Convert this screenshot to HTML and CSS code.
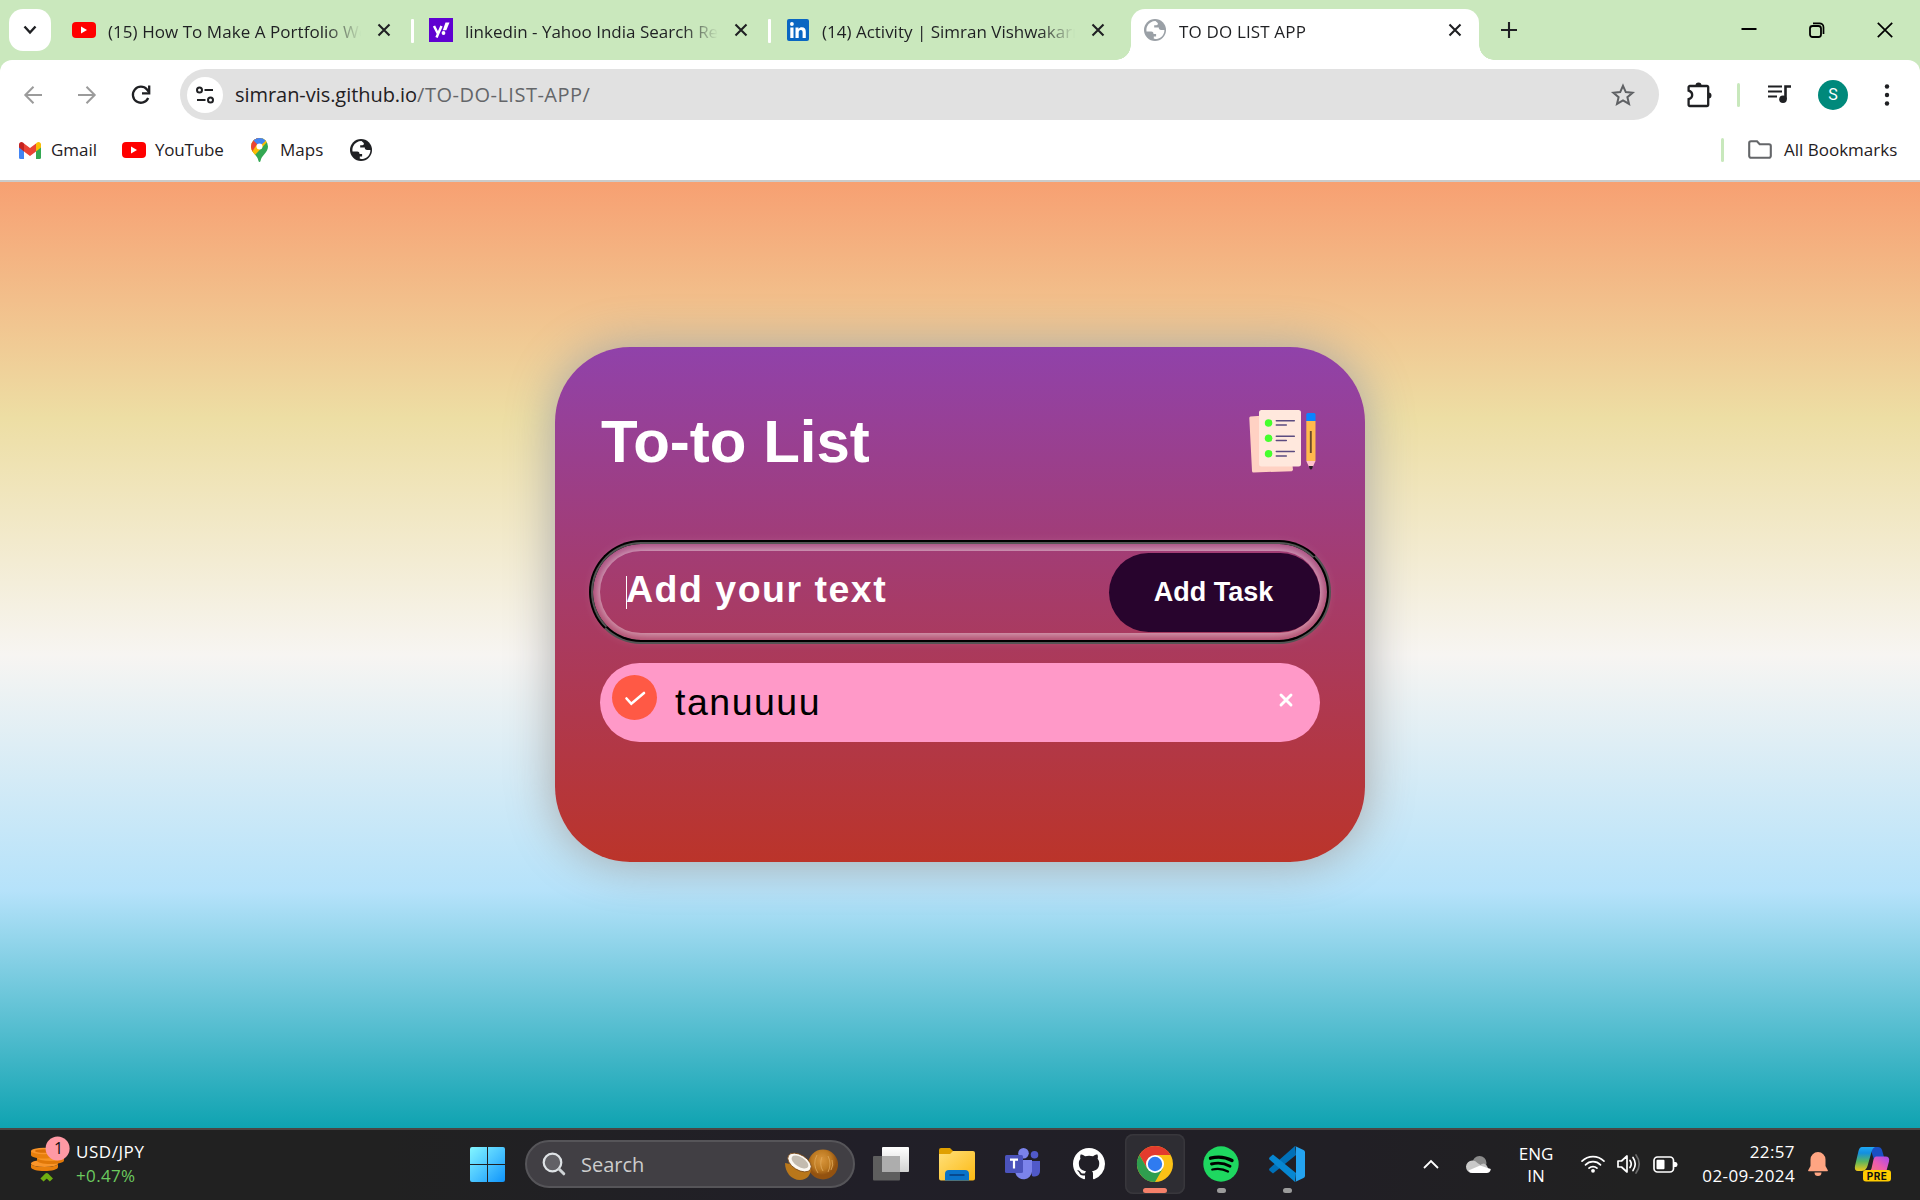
FILE: index.html
```html
<!DOCTYPE html>
<html lang="en">
<head>
<meta charset="utf-8">
<title>TO DO LIST APP</title>
<link rel="stylesheet" href="styles.css">
</head>
<body>
<svg class="sprite" aria-hidden="true">
  <symbol id="youtube" viewBox="0 0 24 18"><rect y="1" width="24" height="16" rx="4" fill="#f00"/><path d="M9 5.5v7l6-3.5z" fill="#fff"/></symbol>
  <symbol id="close" viewBox="0 0 16 16"><path d="M2.5 2.5l11 11M13.500 2.500l-11 11" stroke="#1f2023" stroke-width="2.100" fill="none"/></symbol>
  <symbol id="globe" viewBox="0 0 24 24"><circle cx="12" cy="12" r="11" fill="currentColor"/><path d="M12.500 3c-3.500 0-6.800 2-8.300 5.200-.8 1.800-.9 3.200-.7 5.300h4.700c1.800 0 2.300 1.200 2.300 2.500h2.600v2.500h-2.300v2.300c4 .7 8.200-1.400 9.600-4.600.7-1.500 1-2.700 1-4.300h-3.600c-1.600 0-2-1-2-2.300h-4.600V7.200h2c1.500 0 2-1.200 1.500-2.300z" fill="var(--land)"/></symbol>
</svg>

<header class="browser">
  <div class="tabstrip">
    <button class="tab-search"><svg width="14" height="10" viewBox="0 0 14 10"><path d="M1.500 1.500L7 7.500l5.500-6" fill="none" stroke="#1f2023" stroke-width="2.400"/></svg></button>
    <div class="tab">
      <svg class="fav" viewBox="0 0 24 24"><use href="#youtube" y="3" width="24" height="18"/></svg>
      <span class="tab-title t1">(15) How To Make A Portfolio Website</span>
      <svg class="x"><use href="#close"/></svg><i class="tab-sep"></i>
    </div>
    <div class="tab">
      <svg class="fav" viewBox="0 0 24 24"><rect width="24" height="24" fill="#5f01d1"/><path d="M5 8l3.700 7.300M12.500 8L7.500 19.500" stroke="#fff" stroke-width="2.500" fill="none"/><path d="M16.500 4.500h4l-3.200 7.700h-3.500z" fill="#fff"/><circle cx="14.500" cy="15" r="1.900" fill="#fff"/></svg>
      <span class="tab-title t2">linkedin - Yahoo India Search Results</span>
      <svg class="x"><use href="#close"/></svg><i class="tab-sep"></i>
    </div>
    <div class="tab">
      <svg class="fav" viewBox="0 0 24 24"><rect x="1" y="1" width="22" height="22" rx="2" fill="#0a66c2"/><path d="M4.300 9.500h3.200V20H4.300zM9.500 9.500h3v1.400c.7-1.100 1.800-1.700 3.300-1.700 3 0 4 1.900 4 4.700V20h-3.200v-5.400c0-1.500-.4-2.600-1.800-2.600s-2.100 1.100-2.100 2.600V20H9.500z" fill="#fff"/><circle cx="5.900" cy="6" r="1.900" fill="#fff"/></svg>
      <span class="tab-title t3">(14) Activity | Simran Vishwakarma</span>
      <svg class="x"><use href="#close"/></svg>
    </div>
    <div class="tab active">
      <svg class="fav globe-gray"><use href="#globe"/></svg>
      <span class="tab-title t4">TO DO LIST APP</span>
      <svg class="x"><use href="#close"/></svg>
    </div>
    <svg class="new-tab" width="16" height="16" viewBox="0 0 16 16"><path d="M8 0v16M0 8h16" stroke="#1f2023" stroke-width="2.100"/></svg>
    <div class="window-buttons">
      <svg width="16" height="16" viewBox="0 0 16 16"><path d="M.5 7h15" stroke="#000" stroke-width="2"/></svg>
      <svg width="16" height="16" viewBox="0 0 16 16"><rect x="1" y="4" width="11" height="11" rx="2.500" fill="none" stroke="#000" stroke-width="1.800"/><path d="M4 1.300h6.500a4 4 0 0 1 4 4V12" fill="none" stroke="#000" stroke-width="1.700"/></svg>
      <svg width="16" height="16" viewBox="0 0 16 16"><path d="M.8.800l14.400 14.400M15.200.800L.8 15.200" stroke="#000" stroke-width="1.700"/></svg>
    </div>
  </div>

  <div class="toolbar">
    <svg class="nav-back" width="20" height="20" viewBox="0 0 20 20"><path d="M19 10H3M10.500 1.800L2.300 10l8.200 8.200" fill="none" stroke="#9b9b9b" stroke-width="2"/></svg>
    <svg class="nav-fwd" width="20" height="20" viewBox="0 0 20 20"><path d="M1 10h16M9.500 1.800l8.200 8.200-8.200 8.200" fill="none" stroke="#9b9b9b" stroke-width="2"/></svg>
    <svg class="nav-reload" width="22" height="22" viewBox="0 0 22 22"><path d="M18.200 14A8 8 0 1 1 17 5.500l1.500 2" fill="none" stroke="#1f2023" stroke-width="2.300"/><path d="M12 9.300h7.200V1.500" fill="none" stroke="#1f2023" stroke-width="2.300"/></svg>
    <div class="omnibox">
      <div class="site-chip"><svg width="20" height="20" viewBox="0 0 20 20"><g fill="none" stroke="#1f2023" stroke-width="2"><circle cx="4.500" cy="5" r="2.500"/><path d="M9.500 5h8.500M2 15h8.500"/><circle cx="15.500" cy="15" r="2.500"/></g></svg></div>
      <span class="url">simran-vis.github.io<span>/TO-DO-LIST-APP/</span></span>
      <svg class="star" width="24" height="24" viewBox="0 0 24 24"><path d="M12 2.800l2.800 6.300 6.800.6-5.200 4.500 1.600 6.700-6-3.600-6 3.600 1.600-6.700-5.200-4.500 6.800-.6z" fill="none" stroke="#5f6164" stroke-width="2"/></svg>
    </div>
    <svg class="puzzle" width="26" height="26" viewBox="0 0 26 26"><path d="M4 4h17a1.200 1.200 0 0 1 1.200 1.200v17.600a1.200 1.200 0 0 1-1.200 1.200H3.800a1.200 1.200 0 0 1-1.200-1.200v-5.600c4.800-1.500 4.800-7 0-8.500V5.200A1.200 1.200 0 0 1 4 4z" fill="none" stroke="#1f2023" stroke-width="2.300"/><path d="M9.500 3.500a3 3 0 0 1 6 0zM22.500 10.500a3 3 0 0 1 0 6z" fill="#1f2023"/></svg>
    <i class="green-sep"></i>
    <svg class="media" width="24" height="20" viewBox="0 0 24 20"><path d="M0 1.500h14M0 6.500h14M0 11.500h9" stroke="#1f2023" stroke-width="2.200"/><path d="M23 1.500h-5.500V14" fill="none" stroke="#1f2023" stroke-width="2.600"/><circle cx="15" cy="14.300" r="3.800" fill="#1f2023"/></svg>
    <div class="avatar">S</div>
    <svg class="menu" width="6" height="24" viewBox="0 0 6 24"><g fill="#1f2023"><circle cx="3" cy="3.500" r="2.200"/><circle cx="3" cy="12" r="2.200"/><circle cx="3" cy="20.500" r="2.200"/></g></svg>
  </div>

  <nav class="bookmarks">
    <svg class="bm-gmail" width="22" height="17" viewBox="0 0 22 17"><path d="M0 2v13.500A1.500 1.500 0 0 0 1.500 17H5V6z" fill="#4285f4"/><path d="M22 2v13.500a1.500 1.500 0 0 1-1.500 1.500H17V6z" fill="#34a853"/><path d="M0 2.500C0 .3 2.400-.6 4 .6L5 1.400v8L0 5.500z" fill="#c5221f"/><path d="M22 2.500c0-2.200-2.400-3.100-4-1.900l-1 .8v8l5-3.900z" fill="#fbbc04"/><path d="M5 1.400l6 4.600 6-4.600v8L11 14 5 9.400z" fill="#ea4335"/></svg>
    <span class="b1">Gmail</span>
    <svg class="bm-yt" width="24" height="18"><use href="#youtube"/></svg>
    <span class="b2">YouTube</span>
    <svg class="bm-maps" width="17" height="24" viewBox="0 0 17 24"><defs><clipPath id="pin"><path d="M8.500 0A8.500 8.500 0 0 0 0 8.500c0 3 1.500 5 3.500 7.500 2 2.500 3.500 4 4 7 .2 1.300 1.800 1.300 2 0 .5-3 2-4.500 4-7 2-2.500 3.500-4.500 3.500-7.500A8.500 8.500 0 0 0 8.500 0z"/></clipPath></defs><g clip-path="url(#pin)"><rect width="17" height="24" fill="#34a853"/><path d="M0 0h17L0 20z" fill="#fbbc04"/><path d="M17 3L1 20-2 12 13 0z" fill="#fbbc04"/><path d="M-2 0h12L1 14z" fill="#ea4335"/><path d="M2 2L8.500 8.500 15.500 2 8-2z" fill="#4285f4"/></g><circle cx="8.500" cy="8.500" r="3" fill="#fff"/></svg>
    <span class="b3">Maps</span>
    <svg class="bm-globe" width="24" height="24"><use href="#globe"/></svg>
    <i class="green-sep"></i>
    <svg class="folder" width="24" height="19" viewBox="0 0 24 19"><path d="M3 1.200h6l2.700 3H21A1.800 1.800 0 0 1 22.800 6v10A1.800 1.800 0 0 1 21 17.800H3A1.800 1.800 0 0 1 1.200 16V3A1.800 1.800 0 0 1 3 1.200z" fill="none" stroke="#646669" stroke-width="2.100"/></svg>
    <span class="b4">All Bookmarks</span>
  </nav>
</header>

<main class="page">
  <section class="card">
    <div class="card-head">
      <h1>To-to List</h1>
      <svg width="72" height="66" viewBox="0 0 72 66">
        <path d="M2.500 8.500L39 6l6 56-1.200 1.200L5.500 64.500a1.500 1.500 0 0 1-1.500-1.500L1.300 10a1.500 1.500 0 0 1 1.200-1.500z" fill="#ffd1c3"/>
        <rect x="11" y="2" width="42" height="56.500" rx="2.500" fill="#ffe8dd"/>
        <g fill="#46ff2e"><circle cx="20.600" cy="15" r="3.800"/><circle cx="20.600" cy="30.300" r="3.800"/><circle cx="20.600" cy="45.700" r="3.800"/></g>
        <g stroke="#5b4b80" stroke-width="1.500" stroke-linecap="round"><path d="M28.300 12.800h18M28.300 17h10M28.300 28.200h18M28.300 32.400h10M28.300 43.600h18M28.300 47.900h10"/></g>
        <path d="M58.300 6.500A1.500 1.500 0 0 1 59.800 5H66a1.500 1.500 0 0 1 1.500 1.500V13h-9.200z" fill="#0a84ff"/>
        <path d="M58.300 13h9.200v40h-9.200z" fill="#ffb94d"/>
        <path d="M62.800 23v22" stroke="#6b4a28" stroke-width="1.900"/>
        <path d="M58.300 53h9.200L65 58.500h-4.200z" fill="#ffc2cc"/>
        <path d="M60.800 58h4.200l-.8 2.500a1.400 1.400 0 0 1-2.600 0z" fill="#2a2226"/>
      </svg>
    </div>
    <div class="entry">
      <i class="caret"></i><span class="placeholder">Add your text</span>
      <button class="add">Add Task</button>
    </div>
    <div class="task">
      <span class="check"><svg width="22" height="16" viewBox="0 0 22 16"><path d="M2.500 8.500l4.800 5.300L20 3" fill="none" stroke="#fff" stroke-width="2.600" stroke-linecap="round"/></svg></span>
      <span class="task-text">tanuuuu</span>
      <svg class="remove" width="14" height="14" viewBox="0 0 14 14"><path d="M2 2l10 10M12 2L2 12" stroke="#fff" stroke-width="2.900" stroke-linecap="round"/></svg>
    </div>
  </section>
</main>

<footer class="taskbar">
  <svg class="coins" width="42" height="48" viewBox="0 0 42 48">
    <path d="M1 24.500c0 2 6 3.500 13.500 3.500S28 26.500 28 24.500V28c0 2.500-6 4-13.500 4S1 30.500 1 28z" fill="#e87f0c"/><ellipse cx="14.500" cy="24.500" rx="13.500" ry="3.500" fill="#f9952a"/>
    <path d="M7 18.500v3c0 2 6 3.500 13.500 3.500S34 23.500 34 21.500v-3z" fill="#e07808"/><ellipse cx="20.500" cy="18.500" rx="13.500" ry="3.500" fill="#f79423"/>
    <path d="M1 12v4c0 2 6 3.500 13 3.500S27 18 27 16v-4z" fill="#e87f0c"/><ellipse cx="14" cy="12" rx="13" ry="3.200" fill="#f9952a"/><ellipse cx="14" cy="12" rx="9" ry="1.800" fill="#d96f06"/>
    <path d="M12 41l4.700-4.700 4.700 4.700" fill="none" stroke="#6fae12" stroke-width="4.500" stroke-linejoin="round"/>
    <circle cx="27.600" cy="9.500" r="12" fill="#ff99a4"/><text x="28.500" y="15" text-anchor="middle" class="badge-num">1</text>
  </svg>
  <div class="quote"><span>USD/JPY</span><span class="up">+0.47%</span></div>

  <svg class="start" width="35" height="35" viewBox="0 0 35 35"><defs><linearGradient id="win" x2="1" y2="1"><stop stop-color="#83f6ff"/><stop offset=".5" stop-color="#4cc6ff"/><stop offset="1" stop-color="#0f94fb"/></linearGradient></defs><path d="M2 0h15v17H0V2a2 2 0 0 1 2-2zM18 0h15a2 2 0 0 1 2 2v15H18zM0 18h17v17H2a2 2 0 0 1-2-2zM18 18h17v15a2 2 0 0 1-2 2H18z" fill="url(#win)"/></svg>
  <div class="search">
    <svg width="24" height="24" viewBox="0 0 24 24"><circle cx="10.500" cy="10.500" r="8.800" fill="#626166" stroke="#dfe3e6" stroke-width="2.200"/><path d="M17 17l4.800 4.800" stroke="#cfd3d6" stroke-width="3" stroke-linecap="round"/></svg>
    <span>Search</span>
    <svg class="coconut" width="54" height="32" viewBox="0 0 54 32"><defs><radialGradient id="nut" cx=".45" cy=".35"><stop stop-color="#d9963c"/><stop offset=".65" stop-color="#bd7a22"/><stop offset="1" stop-color="#935210"/></radialGradient></defs><ellipse cx="39" cy="15.500" rx="15" ry="15" fill="url(#nut)"/><path d="M33 6q-5 9 1 18M38 8q-3 8 1 14M44 7q4 8 0 16M48 11q2 5-1 10" fill="none" stroke="#e0a95c" stroke-width=".8"/><path d="M1 14c0 9 6 17 15 17 7 0 11-5 11-12z" fill="#b9771a"/><ellipse cx="15.500" cy="13.500" rx="13" ry="7.500" transform="rotate(32 15.500 13.500)" fill="#fbf8f2" stroke="#7c4a18" stroke-width=".8"/><ellipse cx="16" cy="13" rx="9.500" ry="4.800" transform="rotate(32 16 13)" fill="#c3bbaf"/></svg>
  </div>

  <div class="apps">
    <div class="app"><svg width="36" height="36" viewBox="0 0 36 36"><defs><linearGradient id="tv" y2="1" x2="0"><stop stop-color="#fff"/><stop offset="1" stop-color="#d2d2d2"/></linearGradient></defs><rect x="9" y="1" width="27" height="25" rx="1" fill="url(#tv)"/><rect y="10" width="27" height="24.500" rx="1" fill="#5e5e5e"/><path d="M9 10h18v16H9z" fill="#adadad"/></svg></div>
    <div class="app"><svg width="36" height="36" viewBox="0 0 36 36"><defs><linearGradient id="fold" x2="1" y2="1"><stop stop-color="#ffe07a"/><stop offset="1" stop-color="#fcb912"/></linearGradient></defs><path d="M0 4a2 2 0 0 1 2-2h9l4 4v6H0z" fill="#e0a000"/><path d="M0 8h11l3-3h20a2 2 0 0 1 2 2v25.500a2 2 0 0 1-2 2H2a2 2 0 0 1-2-2z" fill="url(#fold)"/><path d="M6 34.500V28a4 4 0 0 1 4-4h16a4 4 0 0 1 4 4v6.500z" fill="#0a73c9"/><path d="M10.500 29h15" stroke="#07498f" stroke-width="2"/></svg></div>
    <div class="app"><svg width="36" height="36" viewBox="0 0 36 36"><circle cx="29.500" cy="8.800" r="3.800" fill="#5059c9"/><path d="M25 15h10v10a5.500 5.500 0 0 1-8 5z" fill="#5059c9"/><circle cx="18.500" cy="7.200" r="5.300" fill="#7b83eb"/><path d="M11 14h16v11.500a8.500 8.500 0 0 1-16.500 2z" fill="#7b83eb"/><rect y="9" width="18" height="18" rx="1.500" fill="#4b53bc"/><path d="M5 13.600h8M9 13.600v9" stroke="#fff" stroke-width="2.200"/></svg></div>
    <div class="app"><svg width="32" height="32" viewBox="0 0 16 16"><path d="M8 0C3.580 0 0 3.580 0 8c0 3.540 2.290 6.530 5.470 7.590.4.070.55-.17.55-.38 0-.19-.01-.82-.01-1.490-2.010.37-2.530-.49-2.690-.94-.09-.23-.48-.94-.82-1.130-.28-.15-.68-.52-.01-.53.63-.01 1.080.58 1.230.82.72 1.210 1.870.87 2.330.66.070-.52.280-.87.510-1.070-1.780-.2-3.640-.89-3.640-3.950 0-.87.310-1.590.820-2.150-.08-.2-.36-1.020.080-2.120 0 0 .67-.21 2.200.82.640-.18 1.320-.27 2-.27s1.360.09 2 .27c1.530-1.040 2.200-.82 2.200-.82.440 1.100.160 1.920.080 2.120.510.560.820 1.270.820 2.150 0 3.070-1.870 3.750-3.650 3.950.290.250.540.730.540 1.480 0 1.070-.01 1.930-.01 2.200 0 .210.150.460.550.380A8.010 8.010 0 0 0 16 8c0-4.420-3.580-8-8-8z" fill="#fff"/></svg></div>
    <div class="app current"><svg width="36" height="36" viewBox="0 0 36 36"><circle cx="18" cy="18" r="18" fill="#fbc116"/><path d="M2.410 9L10.200 22.500 18 18l0-9H33.590A18 18 0 0 0 2.410 9z" fill="#e33b2e"/><path d="M2.410 9A18 18 0 0 0 18 36l7.800-13.500-7.800 4.500-7.800-4.500z" fill="#2f9e4f"/><circle cx="18" cy="18" r="9" fill="#fff"/><circle cx="18" cy="18" r="7.200" fill="#2f7bf0"/></svg><i class="run wide"></i></div>
    <div class="app"><svg width="36" height="36" viewBox="0 0 36 36"><circle cx="18" cy="18" r="17.700" fill="#1ed760"/><g fill="none" stroke="#000" stroke-linecap="round"><path d="M7.500 12.200q11.500-3 21.500 2.300" stroke-width="3.400"/><path d="M8.500 18q10-2.500 18.500 2.300" stroke-width="2.900"/><path d="M9.300 23.500q8.500-2 15.700 2" stroke-width="2.300"/></g></svg><i class="run"></i></div>
    <div class="app"><svg width="36" height="36" viewBox="0 0 36 36"><path d="M26 0l1 9L4 27.500l-3.500-3q-.8-1 0-2z" fill="#0070b8"/><path d="M26 36l1-9L4 8.500l-3.500 3q-.8 1 0 2z" fill="#0787d2"/><path d="M26 0l8.500 4A2.500 2.500 0 0 1 36 6v24a2.500 2.500 0 0 1-1.500 2L26 36q1-.5 1-2V2q0-1.500-1-2z" fill="#24a3f0"/></svg><i class="run"></i></div>
  </div>

  <svg class="chev" width="16" height="10" viewBox="0 0 16 10"><path d="M1 9l7-7 7 7" fill="none" stroke="#fff" stroke-width="1.800"/></svg>
  <svg class="cloud" width="24" height="17" viewBox="0 0 24 17"><circle cx="12.500" cy="7" r="7" fill="#8b8b8b"/><path d="M5.500 4.500a6 6 0 0 1 5 2.500l6 4-10 6H5A5.500 5.500 0 0 1 5.500 4.500z" fill="#c9c9c9"/><path d="M17 7.500a6 6 0 0 1 3 9c-.7.400-1.500.5-2 .5H6q-3 0-4.500-2L13 9.500q1.500-2 4-2z" fill="#c4c4c4"/><path d="M1.500 14.500L13 9.500l10.800 3.500q-.5 4-4.300 4H5.500q-2.500 0-4-2.500z" fill="#fff"/></svg>
  <div class="lang"><span>ENG</span><span>IN</span></div>
  <svg class="wifi" width="24" height="18" viewBox="0 0 24 18"><g fill="none" stroke="#fff" stroke-width="1.700" stroke-linecap="round"><path d="M1 6.200a15.500 15.500 0 0 1 22 0M4.500 9.800a10.600 10.600 0 0 1 15 0M8 13.200a5.700 5.700 0 0 1 8 0"/></g><circle cx="12" cy="15.800" r="1.900" fill="#fff"/></svg>
  <svg class="sound" width="24" height="20" viewBox="0 0 24 20"><g fill="none" stroke="#fff" stroke-width="1.700" stroke-linecap="round" stroke-linejoin="round"><path d="M1 7h3.500L10 2v16l-5.500-5H1zM13 6.500q2.500 3.500 0 7M16 3.500q4.500 6.500 0 13"/><path d="M19 1q6.500 9 0 18" stroke="#6b6b6b"/></g></svg>
  <svg class="battery" width="25" height="17" viewBox="0 0 25 17"><rect x="1" y="1" width="19.500" height="15" rx="3.500" fill="none" stroke="#fff" stroke-width="1.700"/><rect x="3.500" y="3.800" width="8" height="9.500" rx="1" fill="#fff"/><path d="M21 6h1.500q2 0 2 2.500t-2 2.500H21z" fill="#fff"/></svg>
  <div class="clock"><span class="time">22:57</span><span class="date">02-09-2024</span></div>
  <svg class="bell" width="20" height="24" viewBox="0 0 20 24"><path d="M10 0a7.500 7.500 0 0 1 7.500 7.500v6.500l2.300 4.200a.7.700 0 0 1-.6 1H.8a.7.700 0 0 1-.6-1L2.500 14V7.500A7.500 7.500 0 0 1 10 0zM6.500 20.500h7a3.500 3.500 0 0 1-7 0z" fill="#ffa582"/></svg>
  <svg class="copilot" width="37" height="36" viewBox="0 0 37 36"><defs><linearGradient id="cp1" x2="0" y2="1"><stop stop-color="#1fa8f5"/><stop offset=".25" stop-color="#138fe0"/><stop offset=".6" stop-color="#58b560"/><stop offset="1" stop-color="#f0c818"/></linearGradient><linearGradient id="cp2" x1="1" x2="0" y2="1"><stop stop-color="#a64af0"/><stop offset=".5" stop-color="#ec5bb0"/><stop offset="1" stop-color="#fb7a6a"/></linearGradient></defs><path d="M16 1h8q3 0 4 3l2 7h-6q-3 0-4 3z" fill="#1a4fc4"/><path d="M8 1h13q-2.500 1-3.500 5l-4 14q-1.500 5-6 5H4q-4 0-3-5L4.500 5Q5.500 1 8 1z" fill="url(#cp1)"/><path d="M22 10.500h9.500q4.500 0 3.500 5l-3 11H14q2.500-1 3.500-4l2-9q1-3 2.500-3z" fill="url(#cp2)"/><rect x="9" y="24" width="28" height="11.500" rx="3" fill="#fc0"/><text x="23" y="33.500" text-anchor="middle" class="pre">PRE</text></svg>
</footer>
</body>
</html>
```
FILE: styles.css
```css
* { box-sizing: border-box; }
body {
  margin: 0;
  width: 1920px;
  height: 1200px;
  overflow: hidden;
  display: flex;
  flex-direction: column;
  font-family: "Open Sans", "Noto Sans", sans-serif;
  font-size: 17px;
}
svg { display: block; flex: none; overflow: visible; }
button { border: 0; padding: 0; font: inherit; }
i { display: block; flex: none; }
.sprite { position: absolute; width: 0; height: 0; }

/* Browser frame */
.browser { height: 182px; flex: none; background: #cae8bd; border-bottom: 2px solid #cbcbcb; }
.tabstrip { display: flex; align-items: center; height: 60px; padding-left: 9px; }
.tab-search { width: 42px; height: 42px; border-radius: 14px; background: #fff; display: flex; align-items: center; justify-content: center; margin-right: 6px; }
.tab { width: 357px; height: 60px; display: flex; align-items: center; padding-left: 15px; color: #1f2023; }
.fav { width: 24px; height: 24px; margin-right: 12px; }
.tab-title { width: 253px; overflow: hidden; white-space: nowrap; line-height: 30px; margin-top: 3px; -webkit-mask-image: linear-gradient(90deg, #000 86%, transparent); mask-image: linear-gradient(90deg, #000 86%, transparent); }
.t1 { letter-spacing: .05px; }
.t4 { letter-spacing: .15px; }
.x { width: 16px; height: 16px; margin-left: 15px; }
.tab-sep { width: 3px; height: 24px; margin-left: auto; background: #fff; border-radius: 1px; margin-top: 2px; }
.tab.active { position: relative; width: 348px; height: 51px; margin: 9px 0 0 3px; padding: 0 0 9px 12px; background: #fff; border-radius: 14px 14px 0 0; }
.tab.active::before, .tab.active::after { content: ""; position: absolute; bottom: 0; width: 15px; height: 15px; }
.tab.active::before { left: -15px; background: radial-gradient(circle at 0 0, transparent 14.500px, #fff 15px); }
.tab.active::after { right: -15px; background: radial-gradient(circle at 100% 0, transparent 14.500px, #fff 15px); }
.globe-gray { color: #9aa0a6; --land: #fff; }
.new-tab { margin-left: 22px; }
.window-buttons { display: flex; gap: 52px; margin-left: 224px; }

.toolbar { display: flex; align-items: center; height: 69px; background: #fff; border-radius: 12px 12px 0 0; }
.nav-back { margin-left: 23px; }
.nav-fwd { margin-left: 34px; }
.nav-reload { margin-left: 33px; }
.omnibox { display: flex; align-items: center; width: 1479px; height: 51px; margin-left: 28px; border-radius: 26px; background: #e1e1e1; }
.site-chip { width: 36px; height: 36px; margin-left: 7px; border-radius: 50%; background: #fff; display: flex; align-items: center; justify-content: center; }
.url { margin-left: 12px; width: 420px; white-space: nowrap; color: #1f2023; font-size: 20px; letter-spacing: -.05px; }
.url span { color: #646669; letter-spacing: .5px; }
.star { margin-left: 956px; }
.puzzle { margin-left: 27px; }
.green-sep { width: 3px; height: 24px; border-radius: 2px; background: #c8e8bc; }
.toolbar .green-sep { margin-left: 25px; }
.media { margin-left: 28px; }
.avatar { width: 30px; height: 30px; margin-left: 26px; border-radius: 50%; background: #00897b; color: #fff; font: 16px/30px Roboto, sans-serif; text-align: center; }
.menu { margin-left: 36px; }

.bookmarks { display: flex; align-items: center; height: 51px; padding-bottom: 10px; background: #fff; color: #1f2023; white-space: nowrap; }
.bm-gmail { margin-left: 19px; margin-top: 1px; }
.bookmarks .b1 { margin-left: 10px; width: 61px; }
.bm-yt { margin-left: 10px; }
.bookmarks .b2 { margin-left: 9px; width: 88px; letter-spacing: -.2px; }
.bm-maps { margin-left: 8px; }
.bookmarks .b3 { margin-left: 12px; width: 69px; }
.bm-globe { color: #1f2023; --land: #fff; }
.bookmarks .green-sep { margin-left: 1348px; }
.folder { margin-left: 24px; }
.bookmarks .b4 { margin-left: 12px; }

/* To-do page */
.page { height: 946px; flex: none; padding-top: 165px; background: linear-gradient(#f7a072, #eddea4, #f7f5f2, #b5e2fa, #0fa3b1); }
.card { width: 810px; height: 515px; margin: 0 auto; padding: 61px 45px 0; border-radius: 75px; background: linear-gradient(#9042aa, #a73b67 50%, #bb342a); box-shadow: 0 0 48px #a6a6a6; font-family: "Liberation Sans", Arial, sans-serif; color: #fff; }
.card-head { display: flex; justify-content: space-between; align-items: center; height: 66px; }
h1 { margin: 2px 0 0 1px; font-size: 60px; line-height: 66px; white-space: nowrap; }
.entry { display: flex; align-items: center; height: 82px; margin-top: 77px; padding-left: 26px; border-radius: 41px; outline: 4px groove #000; outline-offset: 7px; box-shadow: 0 0 15px rgba(255, 255, 255, .85); }
.caret { width: 1px; height: 33px; background: #fff; }
.placeholder { flex: 1; margin-left: -1px; font-size: 37.500px; font-weight: 700; letter-spacing: 1.500px; line-height: 44px; margin-top: -6px; white-space: nowrap; }
.add { width: 211px; height: 79px; padding-right: 2px; border-radius: 40px; background: #28042d; color: #fff; font-size: 27px; font-weight: 700; }
.task { display: flex; align-items: center; height: 79px; margin-top: 30px; padding-left: 12px; border-radius: 40px; background: #ff99c8; }
.check { width: 45px; height: 45px; margin-bottom: 10px; border-radius: 50%; background: #ff5945; display: flex; align-items: center; justify-content: center; }
.task-text { flex: 1; margin-left: 18px; margin-top: -2px; color: #000; font-size: 37.500px; letter-spacing: 1.500px; line-height: 44px; }
.remove { margin: 0 27px 6px 0; }

/* Desktop taskbar */
.taskbar { height: 72px; flex: none; display: flex; align-items: center; background: linear-gradient(90deg, #212121 20%, #211f28 45%, #211f25 70%, #212121 85%); box-shadow: inset 0 2px #4b4644; color: #fff; white-space: nowrap; }
.taskbar span { display: block; }
.coins { margin-left: 30px; margin-top: -2px; }
.badge-num { font-size: 16px; fill: #111; }
.quote { width: 100px; margin-left: 4px; line-height: 24px; letter-spacing: .55px; }
.quote .up { color: #6ccb5f; letter-spacing: .35px; }
.start { margin-left: 294px; margin-top: 1px; }
.search { display: flex; align-items: center; width: 330px; height: 48px; margin-left: 20px; padding-left: 15px; border: 2px solid #565559; border-radius: 24px; background: #413f44; color: #cdcdcd; font-size: 20px; }
.search span { width: 180px; margin-left: 15px; }
.coconut { margin-left: 23px; margin-top: 2px; }
.apps { display: flex; margin-left: 3px; }
.app { position: relative; width: 66px; height: 60px; display: flex; align-items: center; justify-content: center; }
.app.current { width: 60px; margin: 0 3px; border-radius: 8px; background: #2e2d33; box-shadow: inset 0 0 0 1.500px #38373c; }
.run { position: absolute; bottom: 1px; left: 50%; width: 9px; height: 5px; margin-left: -4.500px; border-radius: 3px; background: #9b9b9b; }
.run.wide { width: 24px; margin-left: -12px; background: #f5806a; }
.chev { margin-left: 103px; }
.cloud { margin-left: 28px; }
.lang { width: 40px; margin-left: 25px; margin-top: 2px; line-height: 22.500px; text-align: center; }
.wifi { margin-left: 25px; }
.sound { margin-left: 12px; }
.battery { margin-left: 12px; }
.clock { width: 105px; margin-left: 12px; line-height: 24px; text-align: right; letter-spacing: .4px; }
.bell { margin-left: 13px; }
.copilot { margin-left: 26px; }
.pre { font: 700 10px Inter, sans-serif; letter-spacing: .5px; fill: #111; }
```
